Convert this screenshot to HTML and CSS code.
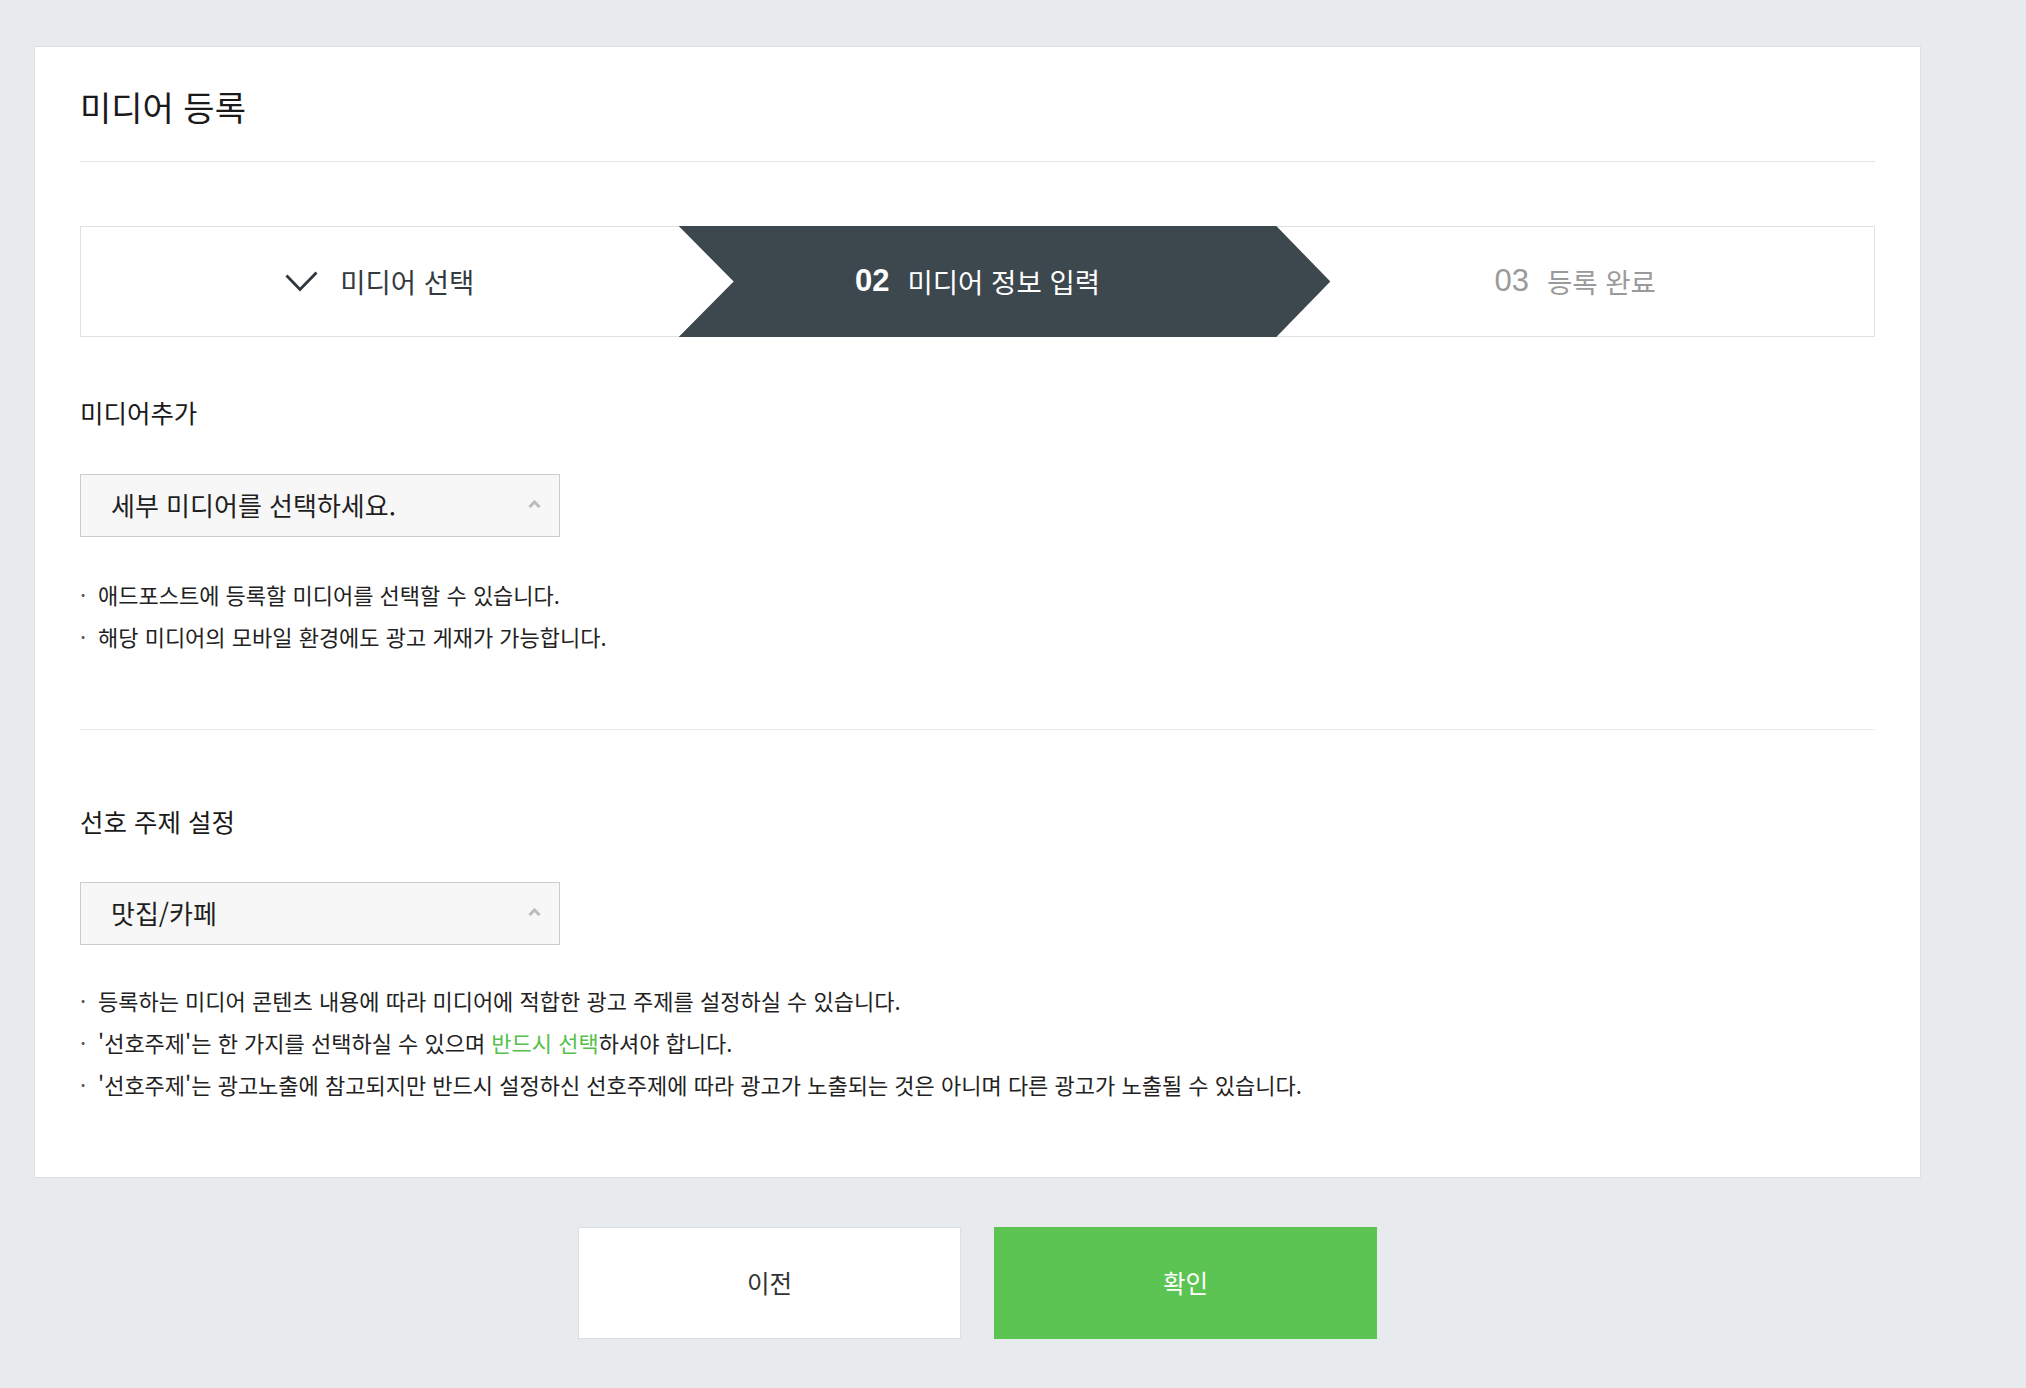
FILE: index.html
```html
<!DOCTYPE html>
<html lang="ko">
<head>
  <meta charset="UTF-8" />
  <meta name="viewport" content="width=device-width, initial-scale=1.0" />
  <title>미디어 등록</title>
  <link rel="stylesheet" href="styles.css">
</head>
<body>
  <div class="page">
    <div class="card">
      <h2 class="card-title">미디어 등록</h2>

      <ol class="steps">
        <li class="step done">
          <svg class="check" width="33" height="21" viewBox="0 0 33 21">
            <polyline points="1.5,4.5 15,18.5 31.5,1.5" fill="none" stroke="#2f373d" stroke-width="2.8" />
          </svg>
          <span>미디어 선택</span>
        </li>
        <li class="step current">
          <span class="label"><span class="num">02</span>미디어 정보 입력</span>
        </li>
        <li class="step todo">
          <span class="label"><span class="num">03</span>등록 완료</span>
        </li>
      </ol>

      <section class="field">
        <h3 class="field-label">미디어추가</h3>
        <div class="select">
          <span>세부 미디어를 선택하세요.</span>
          <svg class="caret" width="13" height="8" viewBox="0 0 13 8">
            <polyline points="1.5,7 6.5,2 11.5,7" fill="none" stroke="#b9bdc1" stroke-width="3" />
          </svg>
        </div>
        <ul class="notes">
          <li>애드포스트에 등록할 미디어를 선택할 수 있습니다.</li>
          <li>해당 미디어의 모바일 환경에도 광고 게재가 가능합니다.</li>
        </ul>
      </section>

      <section class="field last">
        <h3 class="field-label">선호 주제 설정</h3>
        <div class="select">
          <span>맛집/카페</span>
          <svg class="caret" width="13" height="8" viewBox="0 0 13 8">
            <polyline points="1.5,7 6.5,2 11.5,7" fill="none" stroke="#b9bdc1" stroke-width="3" />
          </svg>
        </div>
        <ul class="notes">
          <li>등록하는 미디어 콘텐츠 내용에 따라 미디어에 적합한 광고 주제를 설정하실 수 있습니다.</li>
          <li>'선호주제'는 한 가지를 선택하실 수 있으며 <em class="green">반드시 선택</em>하셔야 합니다.</li>
          <li>'선호주제'는 광고노출에 참고되지만 반드시 설정하신 선호주제에 따라 광고가 노출되는 것은 아니며 다른 광고가 노출될 수 있습니다.</li>
        </ul>
      </section>
    </div>

    <div class="actions">
      <button class="btn">이전</button>
      <button class="btn btn-primary">확인</button>
    </div>
  </div>
</body>
</html>
```

FILE: styles.css
```css
* {
  margin: 0;
  padding: 0;
  box-sizing: border-box;
}

body {
  background: #e8ebee;
  font-family: "Noto Sans CJK KR", "Noto Sans", sans-serif;
  color: #222;
}

.page {
  width: 1887px;
  margin-left: 34px;
  padding-top: 46px;
}

.card {
  background: #fff;
  border: 1px solid #dcdfe3;
  padding: 0 45px 72px;
}

.card-title {
  font-size: 34px;
  font-weight: 400;
  line-height: 44px;
  padding: 38px 0 32px;
  border-bottom: 1px solid #e6e6e6;
  color: #1a1a1a;
}

/* steps */
.steps {
  margin-top: 64px;
  list-style: none;
  display: grid;
  grid-template-columns: repeat(3, 1fr);
  height: 111px;
  border: 1px solid #e1e1e1;
}

.step {
  position: relative;
  display: flex;
  align-items: center;
  justify-content: center;
  padding-bottom: 2px;
  font-size: 27.5px;
  color: #333b41;
}

.step .check {
  margin-right: 22px;
  margin-top: 2px;
}

.step .label {
  position: relative;
  z-index: 1;
  display: flex;
  align-items: center;
}

.step .num {
  font-family: "Liberation Sans", Arial, sans-serif;
  font-size: 31px;
  margin-right: 18px;
}

.step.current {
  color: #fff;
}

.step.current .num {
  font-weight: bold;
}

.step.current::before {
  content: '';
  position: absolute;
  left: 0;
  right: -54px;
  top: -1px;
  bottom: -1px;
  background: #3c474e;
  clip-path: polygon(0 0, calc(100% - 54px) 0, 100% 50%, calc(100% - 54px) 100%, 0 100%, 55px 50%);
}

.step.todo {
  color: #9a9a9a;
}

/* fields */
.field {
  padding-top: 58px;
  padding-bottom: 72px;
  border-bottom: 1px solid #ebebeb;
}

.field.last {
  padding-top: 74px;
  padding-bottom: 0;
  border-bottom: none;
}

.field-label {
  font-size: 25.5px;
  font-weight: 400;
  line-height: 34px;
  color: #1a1a1a;
  margin-bottom: 45px;
}

.field.last .field-label {
  margin-bottom: 44px;
}

.select {
  width: 480px;
  height: 63px;
  display: flex;
  align-items: center;
  justify-content: space-between;
  padding: 0 18px 2px 30px;
  background: #f7f7f7;
  border: 1px solid #c9cdd1;
  font-size: 26px;
  color: #1f1f1f;
}

.select .caret {
  margin-top: -2px;
}

.notes {
  list-style: none;
  margin-top: 36px;
}

.field.last .notes {
  margin-top: 34px;
}

.notes li {
  position: relative;
  padding-left: 18px;
  font-size: 22px;
  line-height: 42px;
  color: #222;
  white-space: nowrap;
}

.notes li::before {
  content: '·';
  position: absolute;
  left: 0;
  top: 0;
  color: #555;
}

.green {
  font-style: normal;
  color: #55c14c;
}

/* buttons */
.actions {
  display: flex;
  justify-content: center;
  gap: 33px;
  margin-top: 49px;
}

.btn {
  width: 383px;
  height: 112px;
  background: #fff;
  border: 1px solid #dcdfe2;
  font-family: "Noto Sans CJK KR", "Noto Sans", sans-serif;
  font-size: 24.5px;
  color: #333;
  padding-bottom: 2px;
}

.btn-primary {
  background: #5bc453;
  border-color: #5bc453;
  color: #fff;
}
```
